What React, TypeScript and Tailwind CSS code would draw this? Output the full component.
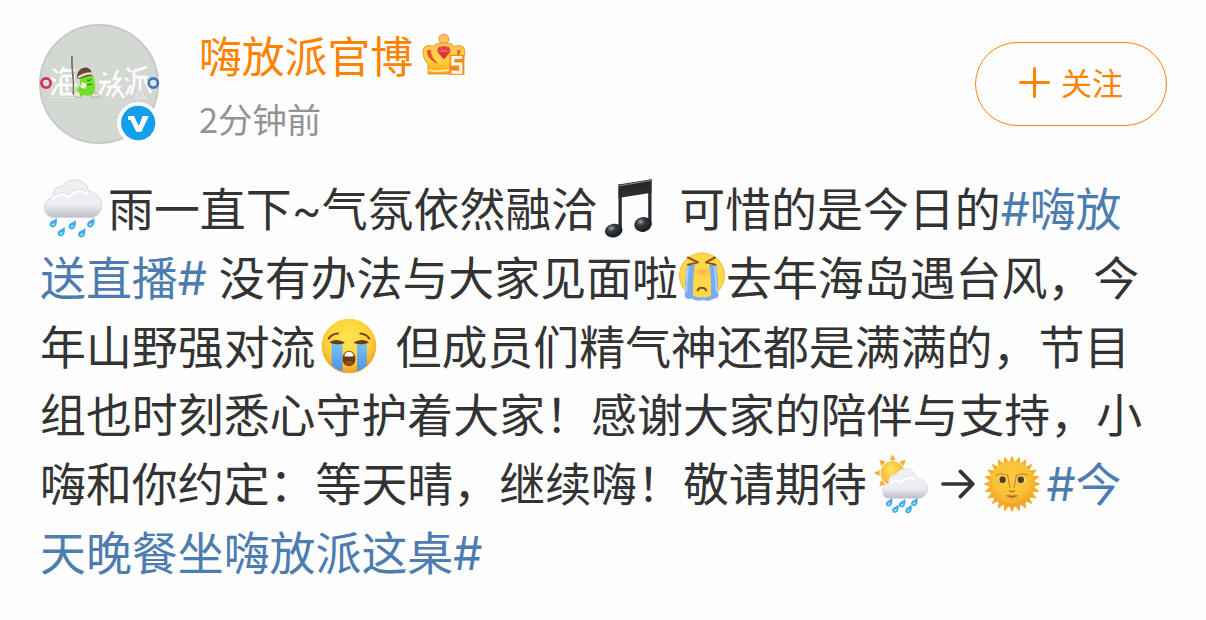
import type { ReactNode } from 'react';

const RAYS = Array.from({ length: 24 }, (_, i) => i * 15);

const Drop = ({ x, y }: { x: number; y: number }) => (
  <g transform={`translate(${x} ${y})`}>
    <path d="M3.5 -5 C4.6 -1 3.6 4.4 -0.4 4.4 C-3.4 4.4 -4.2 1 -2.4 -1 C-1 -2.6 2 -3 3.5 -5Z" fill="#3fabe8" />
    <path d="M1.6 0 C1.6 1.8 0.6 2.6 -0.6 2.6 C-1.6 2.4 -1.4 1.2 -0.6 0.8Z" fill="#b5e8fc" />
  </g>
);

const RainCloud = () => (
  <svg className="block h-[60px] w-[60px]" viewBox="0 0 60 60">
    <defs>
      <linearGradient id="cloud" x1="0" y1="0" x2="0" y2="1">
        <stop offset="0" stopColor="#f1f1f4" />
        <stop offset="0.65" stopColor="#ededf1" />
        <stop offset="1" stopColor="#bfbec9" />
      </linearGradient>
    </defs>
    <path
      d="M11 38.6 C5 38.6 1.2 34 1.2 28.6 C1.2 23.4 4.6 19.6 10 19 C9 11.4 14 6.6 20 7.4 C22 2.8 27 0.8 33 1 C40 1.4 45 6 45.6 12.4 C53.4 12.8 58.8 18.6 58.8 26 C58.8 33.6 54 38.6 47 38.6Z"
      fill="url(#cloud)"
      stroke="#cfced8"
      strokeWidth="0.8"
    />
    <path d="M10 20 C14 15 20 14 25 18 C31 11 39 10 44 15" fill="none" stroke="#fff" strokeWidth="2.4" strokeLinecap="round" />
    <path d="M12 17 C17 12.4 21 12.6 25.6 16 C31 9.4 38 8.6 43 12.8" fill="none" stroke="#dddce3" strokeWidth="1" />
    <Drop x={10} y={44} />
    <Drop x={29} y={46} />
    <Drop x={47.5} y={44} />
    <Drop x={18} y={53} />
    <Drop x={38.5} y={54} />
  </svg>
);

const Notes = () => (
  <svg className="block h-[60px] w-[50px]" viewBox="0 0 50 60">
    <defs>
      <linearGradient id="beam" x1="0" y1="0" x2="0" y2="1">
        <stop offset="0" stopColor="#1c2226" />
        <stop offset="1" stopColor="#3a302e" />
      </linearGradient>
      <radialGradient id="head" cx="0.4" cy="0.3" r="0.7">
        <stop offset="0" stopColor="#9aa0a5" />
        <stop offset="0.35" stopColor="#343a40" />
        <stop offset="1" stopColor="#15191d" />
      </radialGradient>
    </defs>
    <path d="M14.5 6.5 L47.5 1.2 V14.8 L17.5 19.5 L14.5 20Z" fill="url(#beam)" />
    <path d="M14.5 6.5 L17.8 6 V52 H14.5Z M44.2 2 L47.5 1.2 V47 H44.2Z" fill="#252c32" />
    <ellipse cx="9.7" cy="52.6" rx="8.8" ry="6.8" transform="rotate(-12 9.7 52.6)" fill="url(#head)" />
    <ellipse cx="39" cy="46.4" rx="8.8" ry="7.4" transform="rotate(-12 39 46.4)" fill="url(#head)" />
    <path d="M14.5 7.8 L47.2 2.4" stroke="#777f84" strokeWidth="1.2" />
  </svg>
);

const FaceGradient = () => (
  <defs>
    <radialGradient id="face" cx="0.48" cy="0.38" r="0.64">
      <stop offset="0" stopColor="#ffe553" />
      <stop offset="0.62" stopColor="#fed33a" />
      <stop offset="1" stopColor="#f0982a" />
    </radialGradient>
    <linearGradient id="tear" x1="0" y1="0" x2="0" y2="1">
      <stop offset="0" stopColor="#77c5f2" />
      <stop offset="1" stopColor="#4e91e6" />
    </linearGradient>
    <radialGradient id="nose">
      <stop offset="0" stopColor="#ff9c50" stopOpacity="0.75" />
      <stop offset="1" stopColor="#ffbc42" stopOpacity="0" />
    </radialGradient>
  </defs>
);

const WeepingFace = () => (
  <svg className="block h-[50px] w-[46px]" viewBox="0 0 46 50">
    <FaceGradient />
    <circle cx="23" cy="23.5" r="22.5" fill="#fed84a" stroke="#f0bd38" strokeWidth="1" />
    <ellipse cx="23" cy="20" rx="10" ry="6" fill="url(#nose)" />
    <path
      d="M8 12 C8 18 6 25 6 32 V41 C4.5 46 9 48 13 46.6 C16 49.6 22 48.6 24 48 C28 49.6 32 48.4 35 46.4 C38 46.8 41 44 39 41 V32 C39 25 38 18 37 12 L30 13 C32 23 32 33 32 44 C27 46 19 46 14 44 C14 33 14 23 16 13Z"
      fill="#79acee"
    />
    <path d="M8.6 13 C9 18 7.4 26 7.2 40" fill="none" stroke="#a9d0fa" strokeWidth="2" />
    <path d="M36.2 13 C36 18 37.4 26 37.6 40" fill="none" stroke="#a9d0fa" strokeWidth="2" />
    <path d="M9 5.5 L19 10.4 L9 12.8 M36 5.5 L27 10.4 L36.5 12.8" fill="none" stroke="#8d501c" strokeWidth="2" strokeLinecap="round" strokeLinejoin="round" />
    <path d="M18.6 38.4 C20 34.8 25.6 34.8 27.2 38.4" fill="none" stroke="#92471b" strokeWidth="2" strokeLinecap="round" />
  </svg>
);

const SobbingFace = () => (
  <svg className="block h-[56px] w-[56px]" viewBox="0 0 56 56">
    <circle cx="28" cy="28" r="27.3" fill="url(#face)" />
    <path d="M10.5 25.5 H21.5 V53.5 Q14.5 51 10.5 47.5Z M36 25.5 H45.8 V47.5 Q41.5 51.4 36 53.5Z" fill="url(#tear)" />
    <path d="M8.5 24.6 C12 21.2 18 21.2 24 24.8 C20 27 12.5 26.8 8.5 24.6Z M32.6 24.8 C38 21.2 44.5 21.2 48 24.6 C44 26.8 37 27 32.6 24.8Z" fill="#6c3c17" />
    <path d="M7.6 20.6 Q11 15.8 17 15.6 M39.4 15.6 Q45 16 48.4 20.6" fill="none" stroke="#79451b" strokeWidth="2" strokeLinecap="round" />
    <path d="M28 33 C32.4 33 34.4 37 34.4 41 C34.4 45.6 31.6 48 28 48 C24.4 48 21.6 45.6 21.6 41 C21.6 37 23.6 33 28 33Z" fill="#6e3a19" />
    <path d="M23.4 37 C24.2 34.6 26 33.8 28 33.8 C30 33.8 31.8 34.6 32.6 37 Q32.8 38.6 31 38.6 H25 Q23.2 38.6 23.4 37Z" fill="#fff" />
    <ellipse cx="28" cy="45" rx="4" ry="2" fill="#98501f" />
  </svg>
);

const SunShower = () => (
  <svg className="block h-[60px] w-[56px]" viewBox="0 0 56 60">
    <defs>
      <radialGradient id="sun" cx="0.45" cy="0.35" r="0.7">
        <stop offset="0" stopColor="#ffe45e" />
        <stop offset="1" stopColor="#f9ab26" />
      </radialGradient>
    </defs>
    {[-135, -90, -45, 0, 45].map((a) => (
      <path key={a} d="M0 -18.6 L3 -13.2 Q0 -12 -3 -13.2Z" transform={`translate(19.5 19) rotate(${a})`} fill="#f2ae3b" />
    ))}
    <circle cx="19.5" cy="19" r="12" fill="url(#sun)" />
    <path
      d="M16 44.4 C11.6 44.4 9.4 41 9.4 37 C9.4 32.6 12 29.8 15.6 29.4 C14.6 23.6 18.6 20 23 20.6 C25 16.4 29 14.6 33 14.8 C39 15 42.6 19 43 24.4 C50 24.6 54.6 29 54.6 34.6 C54.6 40.4 50.6 44.4 45 44.4Z"
      fill="url(#cloud)"
      stroke="#d6d8df"
      strokeWidth="0.7"
    />
    <path d="M17 29.5 C20 26.4 25 26 28 29 C32 23.6 39 22.4 42 26" fill="none" stroke="#fff" strokeWidth="2.2" />
    <g transform="translate(1.5 4.5) scale(0.9)">
      <Drop x={16} y={49} />
      <Drop x={30.5} y={50} />
      <Drop x={44} y={48.5} />
      <Drop x={23} y={56} />
      <Drop x={37.5} y={56.5} />
    </g>
  </svg>
);

const SunFace = () => (
  <svg className="block h-[58px] w-[58px]" viewBox="0 0 58 58">
    {RAYS.map((a) => (
      <path key={a} d="M0 -28.8 L3.2 -21 H-3.2Z" transform={`translate(29 29) rotate(${a})`} fill="#f1ad29" />
    ))}
    <circle cx="29" cy="29" r="22.8" fill="url(#face)" />
    <circle cx="29" cy="29" r="22.8" fill="#f5a52b" fillOpacity="0.4" />
    <path d="M13 20.5 Q18 17.4 24.6 20.4 L27 33 M45 20.5 Q40 17.4 33.4 20.4 L31 33" fill="none" stroke="#cf8423" strokeWidth="1.2" />
    <ellipse cx="19.4" cy="25" rx="4.6" ry="2.8" fill="#f8dca0" />
    <ellipse cx="38" cy="25" rx="4.6" ry="2.8" fill="#f8dca0" />
    <circle cx="19.6" cy="24.8" r="3.2" fill="#4b3c34" />
    <circle cx="37.8" cy="24.8" r="3.2" fill="#4b3c34" />
    <path d="M26 35.4 Q29 38 32 35.4" fill="none" stroke="#bd711e" strokeWidth="1.3" />
    <path d="M23.4 40.6 Q27 39 29 40.4 Q31 39 34.6 40.6 Q29 46.4 23.4 40.6Z" fill="#dd8a37" />
    <path d="M23.2 40.8 Q29 42.6 34.8 40.8" fill="none" stroke="#a75e22" strokeWidth="0.9" />
  </svg>
);

const Arrow = () => (
  <svg className="block h-[30px] w-[34px]" viewBox="0 0 34 30" fill="none" stroke="#333" strokeWidth="3.7" strokeLinecap="round" strokeLinejoin="round">
    <path d="M2 15 H31.6 M19.4 2.4 L31.8 15 L19.4 27.6" />
  </svg>
);

const Crown = () => (
  <svg className="block h-[44px] w-[44px]" viewBox="0 0 44 44">
    <defs>
      <linearGradient id="crown" x1="0" y1="0" x2="0" y2="1">
        <stop offset="0" stopColor="#ffc34b" />
        <stop offset="0.55" stopColor="#ffd545" />
        <stop offset="1" stopColor="#ff9d13" />
      </linearGradient>
    </defs>
    <circle cx="21.8" cy="6" r="5" fill="#ffc35e" stroke="#e18635" strokeWidth="0.8" />
    <path
      d="M6 41 V31 C2 27 0.8 22 1 18 C1.4 13 6 11 11 13.6 C13 10.6 17 9.8 21.8 9.8 C26.6 9.8 30.4 10.6 32.4 13.6 C38 11 42.4 13.4 42.8 18 C43 23 41 28 38 31 V41Z"
      fill="url(#crown)"
      stroke="#e98a2e"
      strokeWidth="0.9"
    />
    <path d="M5.4 17 C4 23 9 28.4 16.6 30.6 C12 27 9 23 8.8 17Z" fill="#ed4c24" />
    <path d="M38.6 17 C39 20 37 23 34 24.6 C35.4 21.6 35.4 19 35.2 17Z" fill="#ef6529" />
    <path d="M17 13.4 H26.4 L29 18.2 L21.8 26.4 L15 18.2Z" fill="#e2333c" />
    <path d="M17 13.4 L21.8 18 L26.4 13.4 M15 18.2 H29" fill="none" stroke="#ff8c82" strokeWidth="0.8" />
    <path d="M6.4 37 Q14 38.8 27 37" fill="none" stroke="#ffee8d" strokeWidth="2" />
    <rect x="27.6" y="21.8" width="14.8" height="20" fill="#fa8a17" />
    <path d="M40.2 24.4 H30.8 V31 H38.8 V39.2 H29.4" fill="none" stroke="#fff" strokeWidth="3" />
  </svg>
);

const Avatar = () => (
  <svg className="-ml-px block h-[120px] w-[121px]" viewBox="0 0 121 120">
    <circle cx="60" cy="60" r="59" fill="#d3d8d3" stroke="#c6cac8" strokeWidth="2" />
    <g fill="none" stroke="#fafbfa" strokeWidth="2.8">
      <path d="M14 45 L19 49 M12 54 L17 57 M13 71 L18 62 M25 43 L21 50 M23 46.5 H36 M23 52 H34.5 V70 H22 V52 M18 61 H38 M27 54 L29 58 M27 63 L29 67" />
      <path d="M64 49 L68 51 M60 58 H72 M67 58 L60 71 M68 63 H72 L68 72 M79 46 L75 55 H81 L74 63 H80 L73 73 M77 62 L85 74" />
      <path d="M88 44 L92 48 M86 54 L90 57 M87 71 L92 61 M108 43 L95 47 V60 L92 71 M96 53 H109 M101 54 V66 M105 54 L112 69 M110 57 L106 60" />
    </g>
    <path d="M11 73.5 H34" stroke="#eef1ee" strokeWidth="1" strokeDasharray="2 1.5" />
    <path d="M96 74 L101 66 L106 74Z" fill="none" stroke="#eef1ee" />
    <path d="M33 32 C32 45 36 57 34 70" fill="none" stroke="#796d62" strokeWidth="1.7" />
    <path d="M41 49 C47 44 56 49 55.5 59 C58 68 53 74 45 71 C37 75 35 66 41 62Z" fill="#70e226" />
    <path d="M38 52 C39 42 52 40 53 50 Q54 52 50 52 L40 55 Q37 54 38 52Z" fill="#604737" />
    <path d="M39 53.5 Q46 49 53 49.5" fill="none" stroke="#e8d7bd" strokeWidth="2.4" />
    <path d="M48 56 Q50 58 52 55 M47 61 L53 60" fill="none" stroke="#2d6b18" strokeWidth="1" />
    <path d="M43 58 L48 60 L46 65 L41 63Z" fill="#f2eddd" />
    <path d="M37 66 L34 71 Q38 75 42 73 L41 70 M53 69 L52 73 H61 Q62 70 56 69Z" fill="#eee4d1" stroke="#8c8068" strokeWidth="0.5" />
    <circle cx="7" cy="59" r="4.6" fill="#e5dce0" stroke="#ce3354" strokeWidth="2.7" />
    <circle cx="114.3" cy="59" r="4.6" fill="#dfe5ed" stroke="#3c78bc" strokeWidth="2.7" />
    <circle cx="99.2" cy="99" r="21" fill="#fff" />
    <circle cx="99.2" cy="99" r="17.2" fill="#159ee9" />
    <path d="M89 92 H95 L99.8 102 L103.6 92 H109.8 L102.4 107.8 H97.2 L91.6 96 H89Z" fill="#fff" />
  </svg>
);

const Topic = ({ children }: { children: ReactNode }) => <span className="flex items-center text-[#4c7cb0]">{children}</span>;

const Hash = () => <span className="w-[29px] pt-[6px] text-center font-[Inter] text-[46px]">#</span>;

const Line = ({ children }: { children: ReactNode }) => (
  <div className="flex h-[68.8px] items-center whitespace-nowrap">{children}</div>
);

const Post = () => (
  <div className="mt-[28px] text-[45.93px] leading-[68.8px] text-[#333]">
    <Line>
      <span className="mt-[6px] mr-[5px] ml-[3px]"><RainCloud /></span>
      <span>雨一直下</span>
      <span className="w-[30px] pt-[9px] text-center font-[Roboto] text-[42px]">~</span>
      <span>气氛依然融洽</span>
      <span className="mt-[4px] mr-[25px] ml-[7px]"><Notes /></span>
      <span>可惜的是今日的</span>
      <Topic><Hash /><span>嗨放</span></Topic>
    </Line>
    <Line>
      <Topic><span>送直播</span><Hash /></Topic>
      <span className="ml-[12px]">没有办法与大家见面啦</span>
      <span className="mt-[4px] mr-[1px] ml-[1px]"><WeepingFace /></span>
      <span>去年海岛遇台风，今</span>
    </Line>
    <Line>
      <span>年山野强对流</span>
      <span className="mt-[5px] mr-[19px] ml-[5px]"><SobbingFace /></span>
      <span>但成员们精气神还都是满满的，节目</span>
    </Line>
    <Line>
      <span>组也时刻悉心守护着大家！感谢大家的陪伴与支持，小</span>
    </Line>
    <Line>
      <span>嗨和你约定：等天晴，继续嗨！敬请期待</span>
      <span className="mt-[5px] ml-[6px]"><SunShower /></span>
      <span className="mt-[4px] ml-[12px]"><Arrow /></span>
      <span className="mt-[4px] mr-[6px] ml-[8px]"><SunFace /></span>
      <Topic><Hash /><span>今</span></Topic>
    </Line>
    <Line>
      <Topic><span>天晚餐坐嗨放派这桌</span><Hash /></Topic>
    </Line>
  </div>
);

export default function App() {
  return (
    <main className="h-[620px] w-[1206px] overflow-hidden bg-[#fefefe] pt-6 pl-10 font-['Noto_Sans_CJK_SC',sans-serif]">
      <header className="flex h-[120px] items-start">
        <Avatar />
        <div className="ml-[39px]">
          <div className="flex h-[60px] items-center">
            <h1 className="text-[42.8px] leading-[60px] text-[#ff8200]">嗨放派官博</h1>
            <span className="mt-[2px] ml-[9px]"><Crown /></span>
          </div>
          <p className="mt-[9px] text-[34.4px] leading-[50px] text-[#939393]">2分钟前</p>
        </div>
        <button className="mt-[18px] mr-[39px] ml-auto flex h-[84px] w-[192px] items-center justify-center rounded-full border border-[#ff8200] text-[31px] text-[#ff8200]">
          <svg className="mr-[11px] mb-[4px] h-[31px] w-[31px]" viewBox="0 0 31 31" fill="none" stroke="currentColor" strokeWidth="3" strokeLinecap="round">
            <path d="M1.5 15.5 H29.5 M15.5 1.5 V29.5" />
          </svg>
          <span className="pb-[3px]">关注</span>
        </button>
      </header>
      <Post />
    </main>
  );
}
